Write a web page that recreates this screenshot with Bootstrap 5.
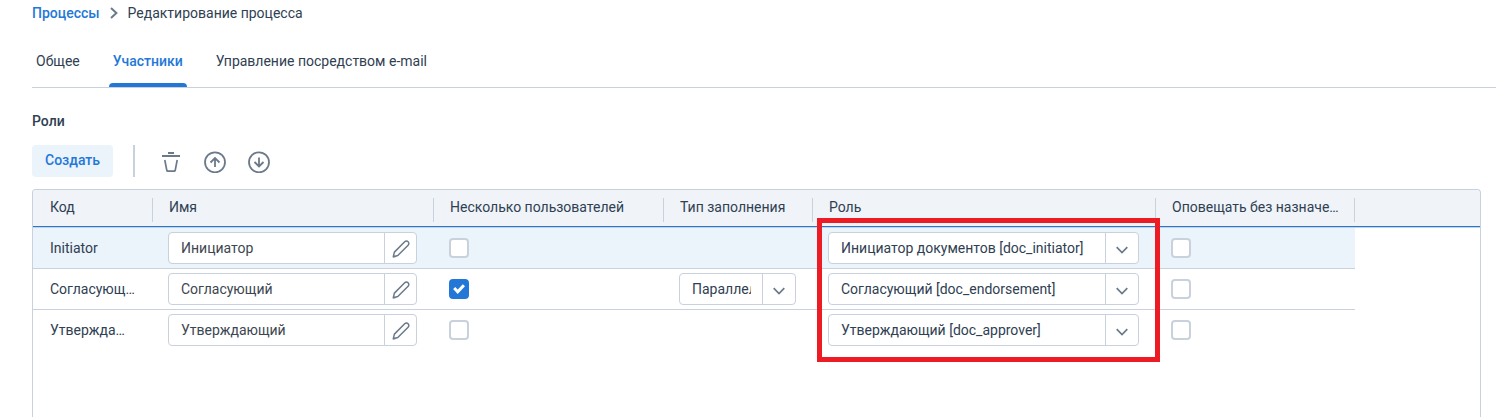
<!DOCTYPE html>
<html lang="ru">
<head>
<meta charset="utf-8">
<meta name="viewport" content="width=device-width, initial-scale=1">
<title>Редактирование процесса</title>
<link href="https://cdn.jsdelivr.net/npm/bootstrap@5.3.0/dist/css/bootstrap.min.css" rel="stylesheet">
<style>
  :root { --ink: #2f4052; --line: #c9d1dc; --accent: #2378d7; --pale: #ebf3fb; --icon: #6b7a8a; }
  body { font-family: Roboto, "Liberation Sans", sans-serif; font-size: 14px; line-height: 20px; color: var(--ink); background: #fff; }
  .page { height: 100vh; padding-left: 32px; overflow: hidden; }
  .crumbs { --bs-breadcrumb-margin-bottom: 0; padding-top: 3px; gap: 10px; }
  .crumbs a { color: var(--accent); font-weight: 500; text-decoration: none; }
  .tabs { gap: 25px; margin-top: 23px; border-bottom: 1px solid var(--line); }
  .tabs .nav-link { position: relative; padding: 5px 4px 16px; color: var(--ink); }
  .tabs .nav-link.active { color: var(--accent); font-weight: 500; }
  .tabs .nav-link.active::after { content: ""; position: absolute; left: 0; right: 0; bottom: 0; height: 4px; border-radius: 4px 4px 0 0; background: var(--accent); }
  .section-title { font-size: 14px; line-height: 20px; font-weight: 500; margin: 23px 0 14px; }
  .create { height: 32px; padding: 0 13px 2px; border: 0; border-radius: 4px; background: var(--pale); color: var(--accent); font-size: 14px; line-height: 20px; font-weight: 500; }
  .divider { width: 2px; height: 32px; margin: 0 20px; background: var(--line); }
  .tools { gap: 12px; }
  .tool { width: 32px; height: 32px; padding: 0; border: 0; color: var(--icon); }
  .grid-panel { margin: 12px 15px 0 0; border: 1px solid var(--line); border-bottom: 0; border-radius: 4px 4px 0 0; }
  .roles { table-layout: fixed; width: 100%; color: var(--ink); border-collapse: separate; border-spacing: 0; }
  .roles th { position: relative; height: 38px; padding: 0 12px 4px 16px; font-weight: 400; background: #f0f4f8; border-bottom: 1px solid var(--line); box-shadow: inset 0 -1px var(--accent); white-space: nowrap; }
  .roles th:first-child { border-top-left-radius: 3px; }
  .roles th:last-child { border-top-right-radius: 3px; }
  .roles th:not(:last-child)::before { content: ""; position: absolute; right: 0; top: 8px; width: 1px; height: 24px; background: var(--line); }
  .roles td { height: 41px; padding: 4px 17px 4px 15px; vertical-align: middle; border-bottom: 1px solid transparent; }
  .roles th:first-child, .roles td:first-child { padding-left: 17px; }
  .roles tbody tr:not(:last-child) td:not(:last-child) { border-bottom-color: var(--line); }
  .roles .current td:not(:last-child) { background: var(--pale); }
  .field, .pick { height: 32px; padding: 0 12px; border: 1px solid var(--line); border-radius: 4px; font-size: 14px; line-height: 20px; color: #3d4650; }
  .field { min-width: 0; }
  .edit { width: 33px; height: 32px; padding: 0; border: 1px solid var(--line); border-radius: 4px; background: #fff; color: var(--icon); }
  .pick { display: block; width: 100%; padding-right: 44px; color: var(--ink);
    background: url("data:image/svg+xml,%3Csvg xmlns='http://www.w3.org/2000/svg' width='12' height='8' fill='none' stroke='%236b7a8a' stroke-width='1.7'%3E%3Cpath d='M.7 1.2 6 6.5l5.3-5.3'/%3E%3C/svg%3E") right 10px top 13px / 12px 8px no-repeat,
      linear-gradient(var(--line), var(--line)) right 32px top / 1px 100% no-repeat, #fff; }
  .tick { display: block; float: none; width: 20px; height: 20px; margin: 0; border: 2px solid var(--line); }
  .form-check-input.tick[type=checkbox] { border-radius: 4px; }
  .tick:checked { border-color: var(--accent); background: var(--accent) url("data:image/svg+xml,%3Csvg xmlns='http://www.w3.org/2000/svg' viewBox='0 0 16 16' fill='none' stroke='%23fff' stroke-width='3'%3E%3Cpath d='m3.2 7 3.5 3.700 6.200-6.500'/%3E%3C/svg%3E") center / 16px no-repeat !important; }
  .highlight { position: absolute; z-index: 2; left: 4px; right: -4px; top: 28px; height: 144px; border: 5px solid #ed1c24; pointer-events: none; }
</style>
</head>
<body>
<svg class="d-none" aria-hidden="true">
  <symbol id="pencil" viewBox="0 0 20 20"><path d="M2.300 17.700l1.100-4.600L13.700 2.800a2.300 2.300 0 0 1 3.400 3.400L6.800 16.500zM2 18l3-.8" fill="none" stroke="currentColor" stroke-width="1.500" stroke-linejoin="round"/></symbol>
</svg>
<main class="page">
  <nav aria-label="Навигация">
    <ol class="breadcrumb crumbs align-items-center">
      <li><a href="#">Процессы</a></li>
      <li class="d-flex" aria-hidden="true"><svg width="8" height="12" fill="none" stroke="#6b7a8a" stroke-width="2"><path d="M1 1l5.400 5L1 11"/></svg></li>
      <li aria-current="page">Редактирование процесса</li>
    </ol>
  </nav>

  <ul class="nav tabs">
    <li class="nav-item"><a class="nav-link" href="#">Общее</a></li>
    <li class="nav-item"><a class="nav-link active" aria-current="page" href="#">Участники</a></li>
    <li class="nav-item"><a class="nav-link" href="#">Управление посредством e-mail</a></li>
  </ul>

  <h2 class="section-title">Роли</h2>
  <div class="d-flex align-items-center">
    <button type="button" class="btn create">Создать</button>
    <span class="divider"></span>
    <div class="d-flex tools">
      <button type="button" class="btn tool d-flex align-items-center justify-content-center" aria-label="Удалить"><svg width="24" height="24" viewBox="0 -1 24 24" fill="none" stroke="currentColor" stroke-width="2"><path d="M9 3h6M3 6h18" stroke-width="1.800"/><path d="M5.800 10l2 10.300q.2.900 1 .9h6.400q.8 0 1-.9l2-10.300" stroke-width="1.700"/></svg></button>
      <button type="button" class="btn tool d-flex align-items-center justify-content-center" aria-label="Вверх"><svg width="24" height="24" viewBox="0 -1 24 24" fill="none" stroke="currentColor" stroke-width="1.800"><circle cx="12" cy="12.300" r="10"/><path d="M12 17V9M7.500 12.500 12 8l4.500 4.500"/></svg></button>
      <button type="button" class="btn tool d-flex align-items-center justify-content-center" aria-label="Вниз"><svg width="24" height="24" viewBox="0 -1 24 24" fill="none" stroke="currentColor" stroke-width="1.800"><circle cx="12" cy="12.300" r="10"/><path d="M12 7.500v8M7.500 12 12 16.500l4.500-4.500"/></svg></button>
    </div>
  </div>

  <div class="grid-panel vh-100">
    <table class="roles">
      <colgroup><col style="width:120px"><col style="width:281px"><col style="width:230px"><col style="width:149px"><col style="width:343px"><col style="width:199px"><col></colgroup>
      <thead>
        <tr>
          <th scope="col">Код</th>
          <th scope="col">Имя</th>
          <th scope="col">Несколько пользователей</th>
          <th scope="col">Тип заполнения</th>
          <th scope="col">Роль<span class="highlight"></span></th>
          <th scope="col"><div class="text-truncate">Оповещать без назначения</div></th>
          <th></th>
        </tr>
      </thead>
      <tbody>
        <tr class="current">
          <td><div class="text-truncate">Initiator</div></td>
          <td><div class="input-group flex-nowrap"><input class="form-control field" type="text" value="Инициатор" aria-label="Имя"><button type="button" class="btn edit" aria-label="Изменить"><svg width="20" height="20"><use href="#pencil"/></svg></button></div></td>
          <td><input class="form-check-input tick" type="checkbox" aria-label="Несколько пользователей"></td>
          <td></td>
          <td><select class="form-select pick" aria-label="Роль"><option>Инициатор документов [doc_initiator]</option></select></td>
          <td><input class="form-check-input tick" type="checkbox" aria-label="Оповещать без назначения"></td>
          <td></td>
        </tr>
        <tr>
          <td><div class="text-truncate">Согласующий</div></td>
          <td><div class="input-group flex-nowrap"><input class="form-control field" type="text" value="Согласующий" aria-label="Имя"><button type="button" class="btn edit" aria-label="Изменить"><svg width="20" height="20"><use href="#pencil"/></svg></button></div></td>
          <td><input class="form-check-input tick" type="checkbox" checked aria-label="Несколько пользователей"></td>
          <td><select class="form-select pick" aria-label="Тип заполнения"><option>Параллельно</option></select></td>
          <td><select class="form-select pick" aria-label="Роль"><option>Согласующий [doc_endorsement]</option></select></td>
          <td><input class="form-check-input tick" type="checkbox" aria-label="Оповещать без назначения"></td>
          <td></td>
        </tr>
        <tr>
          <td><div class="text-truncate">Утверждающий</div></td>
          <td><div class="input-group flex-nowrap"><input class="form-control field" type="text" value="Утверждающий" aria-label="Имя"><button type="button" class="btn edit" aria-label="Изменить"><svg width="20" height="20"><use href="#pencil"/></svg></button></div></td>
          <td><input class="form-check-input tick" type="checkbox" aria-label="Несколько пользователей"></td>
          <td></td>
          <td><select class="form-select pick" aria-label="Роль"><option>Утверждающий [doc_approver]</option></select></td>
          <td><input class="form-check-input tick" type="checkbox" aria-label="Оповещать без назначения"></td>
          <td></td>
        </tr>
      </tbody>
    </table>
  </div>
</main>
<script src="https://cdn.jsdelivr.net/npm/bootstrap@5.3.0/dist/js/bootstrap.bundle.min.js"></script>
</body>
</html>
